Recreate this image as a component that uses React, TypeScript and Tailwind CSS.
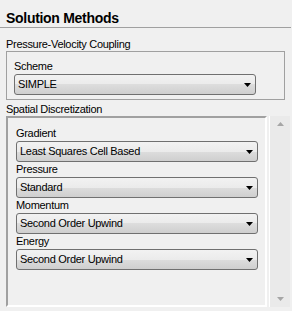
import React from 'react';

const font = { fontFamily: '"Liberation Sans", Arial, sans-serif' };

function Combo({ value }: { value: string }) {
  return (
    <div className="flex h-[21px] w-[242px] items-center justify-between rounded-[3px] border border-[#707070] bg-[linear-gradient(#f2f2f2_0%,#ebebeb_50%,#dddddd_50%,#cfcfcf_100%)] pl-[3px] pr-[4px]">
      <span className="text-[11px] leading-[13px] tracking-[-0.3px] text-black">{value}</span>
      <svg width="7" height="4" viewBox="0 0 7 4">
        <path d="M0 0h7L3.5 4z" fill="#000" />
      </svg>
    </div>
  );
}

function Field({ label, value }: { label: string; value: string }) {
  return (
    <div className="flex flex-col gap-[1px]">
      <span className="text-[11px] leading-[13px] tracking-[-0.3px] text-black">{label}</span>
      <Combo value={value} />
    </div>
  );
}

export default function App() {
  return (
    <div className="flex h-[311px] w-[292px] flex-col overflow-hidden bg-[#f0f0f0]" style={font}>
      {/* title */}
      <div className="pl-[6px] pt-[10px] text-[14px] font-bold leading-[16px] tracking-[-0.3px] text-black">
        Solution Methods
      </div>
      <div className="mt-[1px] h-px w-[291px] bg-[#a0a0a0]" />

      {/* pressure-velocity coupling */}
      <div className="mt-[10px] pl-[6px] text-[11px] leading-[13px] tracking-[-0.3px] text-black">
        Pressure-Velocity Coupling
      </div>
      <div className="ml-[6px] w-[279px] border border-[#a0a0a0] pb-[4px] pl-[7px] pt-[8px]">
        <Field label="Scheme" value="SIMPLE" />
      </div>

      {/* spatial discretization */}
      <div className="mt-[3px] pl-[6px] text-[11px] leading-[13px] tracking-[-0.3px] text-black">
        Spatial Discretization
      </div>
      <div className="ml-[6px] flex h-[191px] gap-[2px]">
        <div className="flex w-[261px] flex-col gap-[1px] border-2 border-t-[#a0a0a0] border-l-[#a0a0a0] border-r-[#ffffff] border-b-[#ffffff] pl-[8px] pt-[9px]">
          <Field label="Gradient" value="Least Squares Cell Based" />
          <Field label="Pressure" value="Standard" />
          <Field label="Momentum" value="Second Order Upwind" />
          <Field label="Energy" value="Second Order Upwind" />
        </div>
        <div className="flex w-[21px] flex-col items-center justify-between border-l border-[#ffffff] bg-[#eaeaea] py-[6px]">
          <svg width="7" height="4" viewBox="0 0 7 4">
            <path d="M0 4h7L3.5 0z" fill="#a6a6a6" />
          </svg>
          <svg width="7" height="4" viewBox="0 0 7 4">
            <path d="M0 0h7L3.5 4z" fill="#a6a6a6" />
          </svg>
        </div>
      </div>
    </div>
  );
}
